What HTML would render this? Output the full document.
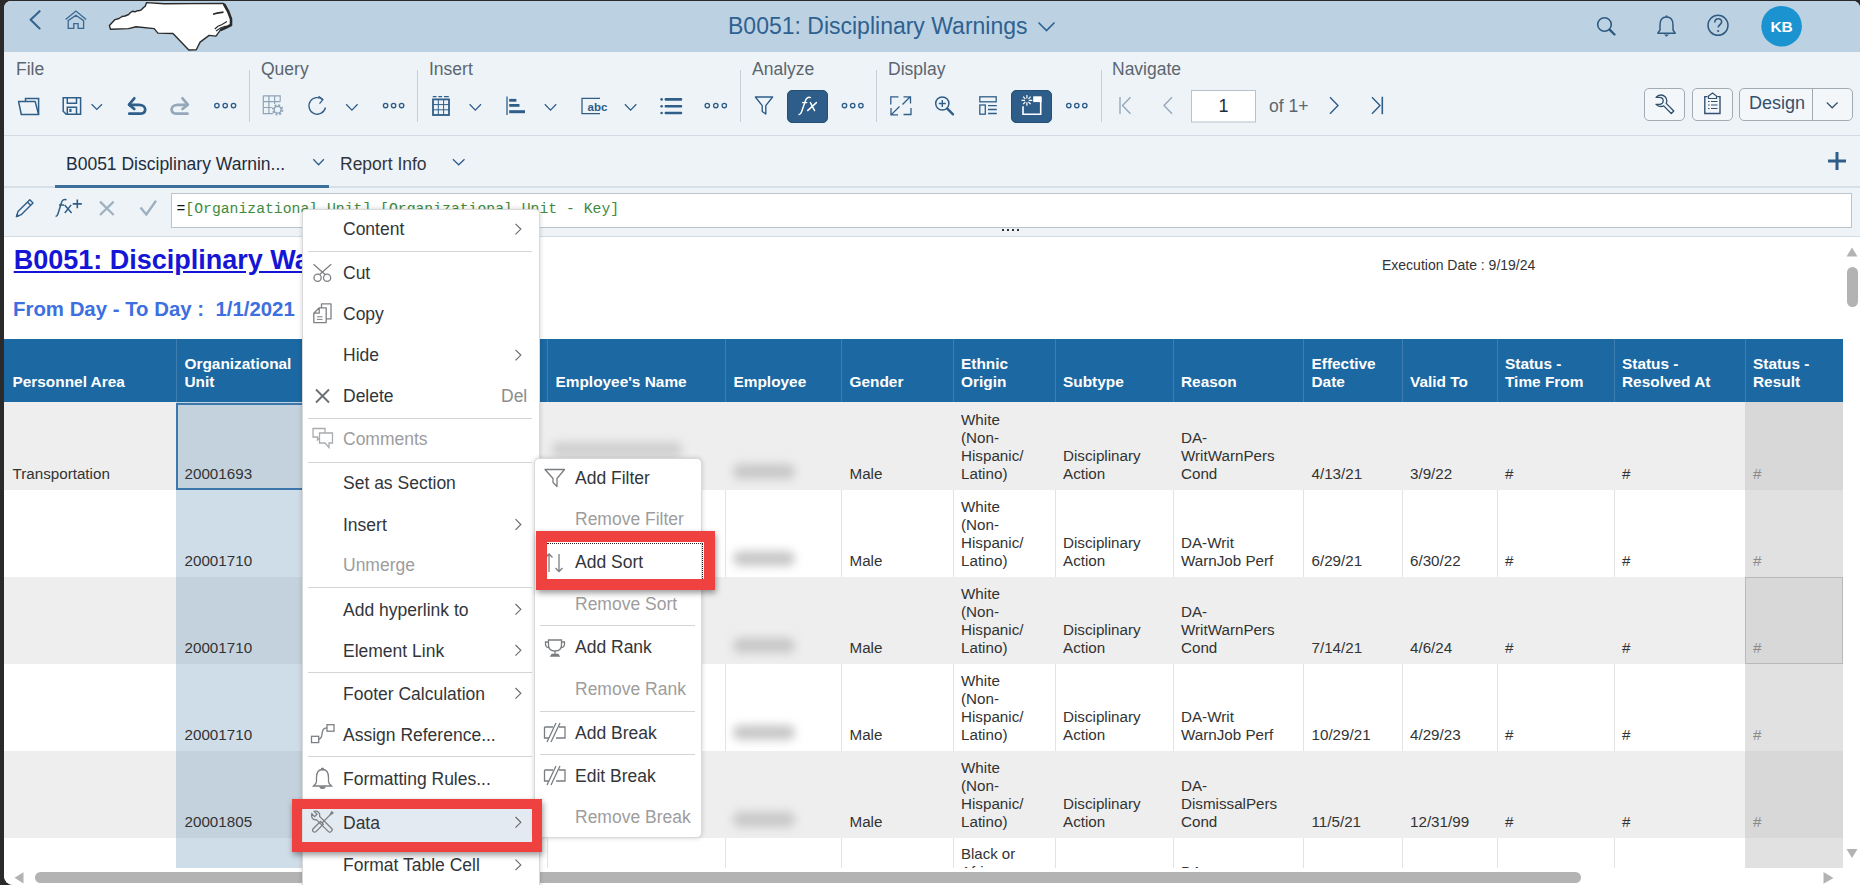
<!DOCTYPE html>
<html><head><meta charset="utf-8">
<style>
*{margin:0;padding:0;box-sizing:border-box}
html,body{width:1860px;height:885px;overflow:hidden;background:#2a2a2a;font-family:"Liberation Sans",sans-serif}
.a{position:absolute}
#win{position:absolute;left:4px;top:1px;width:1856px;height:884px;border-radius:7px 7px 0 9px;overflow:hidden;background:#fff}
#pg{position:absolute;left:-4px;top:-1px;width:1860px;height:885px}
svg{position:absolute;overflow:visible}
.lbl{position:absolute;font-size:17.5px;color:#5b6670;top:58.5px;white-space:nowrap;line-height:20px}
.sep{position:absolute;top:70px;width:1px;height:52px;background:#c5cfd8}
.th{position:absolute;top:339px;height:63px;background:#1a65a0;color:#fff;font-weight:bold;font-size:15px;line-height:18px;padding-left:8px;border-left:1px solid #3f7fb3}
.th span{position:absolute;left:8px;bottom:9px;white-space:nowrap}
.cell{position:absolute;font-size:15px;line-height:18px;color:#333;white-space:nowrap}
.mi{position:absolute;left:343px;font-size:17.5px;line-height:20px;color:#32363a;white-space:nowrap}
.mi.dis,.si.dis{color:#9d9d9d}
.ms{position:absolute;height:1px;background:#d3d6d9}
.si{position:absolute;left:575px;font-size:17.5px;line-height:20px;color:#32363a;white-space:nowrap}
.arr{position:absolute;left:514px}
</style></head><body>
<div id="win"><div id="pg">
<!-- shell header -->
<div class="a" style="left:0;top:0;width:1860px;height:52px;background:#bcd2e3"></div>
<svg style="left:0;top:0" width="1" height="1">
 <path d="M39.6 11.2 L30.6 19.8 L39.6 28.4" fill="none" stroke="#33638e" stroke-width="2.1" stroke-linecap="round" stroke-linejoin="round"/>
 <path d="M65.6 19.6 L75.9 11 L86.2 19.6" fill="none" stroke="#3b6690" stroke-width="1.3"/><path d="M68.2 28.3 V20.6 L75.9 15.2 L83.6 20.6 V28.3 H78.1 V23.6 H73.8 V28.3 Z" fill="none" stroke="#3b6690" stroke-width="1.3" stroke-linejoin="miter"/>
 <path d="M146.6 2.6 L164 3.8 L223.4 3.4 L227.9 11.3 L230.9 18.8 L230.9 24.8 L220.4 30.1 L215.9 36.1 L209.1 35.4 L200.1 42.1 L196.3 49.7 L188.8 50 L173 33.5 L157.9 33.1 L154.2 28.6 L136.1 26.7 L128.6 28.6 L110.5 29.3 L109.4 25.6 L115 19.6 L119 18.5 L122 16.5 L125 16 L128.6 14.5 L130.5 12.5 L132.4 11.3 L135 11.8 L137 10.8 L139.5 10.5 L141.4 9.8 L143.5 7.5 L145.1 6.4 Z" fill="#fff" stroke="#2b2b2b" stroke-width="1.4" stroke-linejoin="round"/>
 <path d="M224 4 L228.2 11.5 L231 19 L231 25 L225 28 L220.4 30.1" stroke="#2b2b2b" stroke-width="2.6" fill="none" stroke-linejoin="round"/>
 <path d="M213 14.2 L217 13.2 L223.5 12.2" stroke="#2b2b2b" stroke-width="1.7" fill="none"/>
 <path d="M214.8 29 L218 26.2 L222 24.5 L227 21.5 M216 31 L221 27.8 L226 26" stroke="#2b2b2b" stroke-width="1.2" fill="none"/>
</svg>
<div class="a" style="left:728px;top:12px;font-size:23px;line-height:28px;color:#2f6190;white-space:nowrap">B0051: Disciplinary Warnings</div>
<svg style="left:0;top:0" width="1" height="1">
 <path d="M1038.5 22.5 L1046.5 30.5 L1054.5 22.5" fill="none" stroke="#2f6190" stroke-width="1.6"/>
 <circle cx="1604.5" cy="24.5" r="6.8" fill="none" stroke="#2f5a80" stroke-width="1.6"/>
 <path d="M1609.6 29.6 L1614.5 34.5" stroke="#2f5a80" stroke-width="2.4" stroke-linecap="round"/>
 <path d="M1666.5 17 C1661.5 17 1660 21 1660 25 V30 L1657.8 33.2 H1675.2 L1673 30 V25 C1673 21 1671.5 17 1666.5 17 Z" fill="none" stroke="#2f5a80" stroke-width="1.5" stroke-linejoin="round"/>
 <circle cx="1666.5" cy="16.2" r="1" fill="#2f5a80"/>
 <path d="M1664 34.5 L1666.5 36.8 L1669 34.5 Z" fill="#2f5a80"/>
 <circle cx="1718" cy="25.3" r="10" fill="none" stroke="#2f5a80" stroke-width="1.5"/>
 <path d="M1714.8 22.5 C1714.8 20 1716.4 18.8 1718.2 18.8 C1720.2 18.8 1721.6 20.2 1721.6 22 C1721.6 24.6 1718.2 24.8 1718.2 27.6" fill="none" stroke="#2f5a80" stroke-width="1.6"/>
 <circle cx="1718.2" cy="31" r="1.1" fill="#2f5a80"/>
 <circle cx="1781.6" cy="26.2" r="20.3" fill="#1b93d1"/>
</svg>
<div class="a" style="left:1761px;top:17px;width:41px;text-align:center;font-size:15.5px;line-height:20px;font-weight:bold;letter-spacing:-0.3px;color:#fff">KB</div>

<!-- toolbar -->
<div class="a" style="left:0;top:52px;width:1860px;height:84px;background:#eef3f8;border-bottom:1px solid #d3dce5"></div>
<div class="lbl" style="left:16px">File</div>
<div class="lbl" style="left:261px">Query</div>
<div class="lbl" style="left:429px">Insert</div>
<div class="lbl" style="left:752px">Analyze</div>
<div class="lbl" style="left:888px">Display</div>
<div class="lbl" style="left:1112px">Navigate</div>
<div class="sep" style="left:249px"></div>
<div class="sep" style="left:417px"></div>
<div class="sep" style="left:740px"></div>
<div class="sep" style="left:876px"></div>
<div class="sep" style="left:1101px"></div>
<svg style="left:0;top:0" width="1" height="1" fill="none" stroke="#2f5e89" stroke-width="1.5">
 <!-- folder -->
 <path d="M25.5 101.3 V98.6 H38.6 V114.5"/>
 <path d="M18.6 101.6 H35.2 L38.6 114.5 H21.3 Z" stroke-linejoin="round"/>
 <!-- floppy -->
 <path d="M63.2 97.8 H80.6 V114.3 H66.2 L63.2 111.3 Z"/>
 <path d="M67.3 97.8 V103.3 H76.5 V97.8 M67.3 114.3 V107.2 H76.5 V114.3"/>
 <rect x="69.3" y="108.8" width="2.2" height="3.2" fill="#2f5e89" stroke="none"/>
 <path d="M91.6 104.2 L96.8 109.4 L102 104.2" stroke-width="1.3"/>
 <!-- undo -->
 <path d="M134.3 98.3 L129 104.6 L134.3 109" stroke-width="2.7" stroke-linecap="round" stroke-linejoin="round"/>
 <path d="M129.5 104.8 H139 C143 104.8 145.2 107 145.2 109.4 C145.2 112 143 113.7 139.5 113.7 H129.3" stroke-width="2.7" stroke-linecap="round"/>
 <!-- redo -->
 <g stroke="#94a8ba" stroke-width="2.7" stroke-linecap="round" stroke-linejoin="round">
 <path d="M182.5 98.3 L187.8 104.6 L182.5 109"/>
 <path d="M187.3 104.8 H177.8 C173.8 104.8 171.6 107 171.6 109.4 C171.6 112 173.8 113.7 177.3 113.7 H187.5"/>
 </g>
 <!-- more -->
 <g stroke-width="1.35"><circle cx="216.9" cy="105.5" r="2.2"/><circle cx="225.2" cy="105.5" r="2.2"/><circle cx="233.5" cy="105.5" r="2.2"/></g>
 <!-- grid gear -->
 <g stroke="#8ea3b6" stroke-width="1.2">
  <path d="M263.3 95.8 H280.2 V101.5 M263.3 95.8 V113.6 H275.2 M263.3 101.6 H280.2 M263.3 107.5 H273 M268.9 95.8 V113.6 M274.6 95.8 V104"/>
  <circle cx="277.6" cy="109.8" r="6.2" fill="#eef3f8" stroke="none"/>
 </g>
 <circle cx="277.6" cy="109.8" r="4.7" stroke="#8ea3b6" stroke-width="2" stroke-dasharray="1.85 1.85"/>
 <circle cx="277.6" cy="109.8" r="3.4" stroke="#8ea3b6" stroke-width="1.3" fill="#eef3f8"/>
 <!-- refresh -->
 <path d="M322.9 99.8 A8.3 8.3 0 1 0 325.4 107.5" stroke-width="1.3"/>
 <path d="M318.5 96.2 L322.9 99.6 L319.5 103.6" stroke-width="1.3" stroke-linejoin="round"/>
 <path d="M346.2 104.3 L351.9 110.1 L357.6 104.3" stroke-width="1.3"/>
 <g stroke-width="1.35"><circle cx="385.6" cy="105.5" r="2.2"/><circle cx="393.6" cy="105.5" r="2.2"/><circle cx="401.6" cy="105.5" r="2.2"/></g>
 <!-- table -->
 <path d="M432.8 96.6 H436.5 M438.4 96.6 H442.1 M444 96.6 H448.8" stroke-width="1.2"/>
 <rect x="433" y="99.4" width="16" height="15.6" stroke-width="1.8"/>
 <path d="M433 104.6 H449 M433 109.8 H449 M438.3 99.4 V115 M443.6 99.4 V115" stroke-width="1"/>
 <path d="M469.6 104.3 L475.3 110.1 L481 104.3" stroke-width="1.3"/>
 <!-- bar chart -->
 <path d="M507 96.6 V114.9" stroke-width="1.3"/>
 <g fill="#2f5e89" stroke="none"><rect x="509.2" y="98.9" width="7.2" height="2.8"/><rect x="509.2" y="104" width="10.3" height="2.8"/><rect x="509.2" y="110.2" width="15.8" height="3"/></g>
 <path d="M544.8 104.3 L550.5 110.1 L556.2 104.3" stroke-width="1.3"/>
 <!-- abc -->
 <path d="M600 98.3 H582 V113.6 H600" stroke-width="1.3"/>
 <path d="M624.9 104.3 L630.6 110.1 L636.3 104.3" stroke-width="1.3"/>
 <!-- list -->
 <g fill="#2f5e89" stroke="none"><circle cx="661.6" cy="99.4" r="1.3"/><circle cx="661.6" cy="106.2" r="1.3"/><circle cx="661.6" cy="113" r="1.3"/>
 <rect x="664.6" y="98.1" width="17.6" height="2.6" rx="1"/><rect x="664.6" y="104.9" width="17.6" height="2.6" rx="1"/><rect x="664.6" y="111.7" width="17.6" height="2.6" rx="1"/></g>
 <g stroke-width="1.35"><circle cx="707.3" cy="105.5" r="2.2"/><circle cx="715.8" cy="105.5" r="2.2"/><circle cx="724.3" cy="105.5" r="2.2"/></g>
 <!-- filter -->
 <path d="M755.4 97 H772.6 L765.8 105.6 V114 L762.2 111.5 V105.6 Z" stroke-width="1.4" stroke-linejoin="round"/>
 <rect x="787.5" y="90.5" width="40" height="32" rx="4.5" fill="#2e5d89" stroke="#264f78" stroke-width="1"/>
 <g stroke-width="1.35"><circle cx="844.5" cy="105.5" r="2.2"/><circle cx="852.7" cy="105.5" r="2.2"/><circle cx="860.9" cy="105.5" r="2.2"/></g>
 <!-- fit -->
 <path d="M890.8 104.5 V96.8 H898.5 M911 108 V114.5 H903.5" stroke-width="1.3"/>
 <path d="M902.5 104.5 L910.2 96.8 M903.5 96.8 H910.5 V103.5 M899.5 106.5 L891.6 114.4 M891 108 V114.8 H898" stroke-width="1.3"/>
 <!-- zoom -->
 <circle cx="942.3" cy="103.5" r="6.6" stroke-width="1.5"/>
 <path d="M942.3 100 V107 M938.8 103.5 H945.8" stroke-width="1.4"/>
 <path d="M947.3 108.6 L953 114.3" stroke-width="2.4" stroke-linecap="round"/>
 <!-- layout -->
 <rect x="979.8" y="96.8" width="16.4" height="5" stroke-width="1.3"/>
 <rect x="979.8" y="105" width="5.5" height="9.2" stroke-width="1.3"/>
 <path d="M988 105.6 H996.8 M988 109.5 H996.8 M988 113.5 H996.8" stroke-width="1.3"/>
 <rect x="1011.5" y="90.5" width="40" height="32" rx="4.5" fill="#2e5d89" stroke="#264f78" stroke-width="1"/>
 <rect x="1033.2" y="96.3" width="8.3" height="5.8" fill="#fff" stroke="none"/>
 <g stroke="#fff" stroke-width="1.6"><path d="M1023 106.2 V114.2 H1040.7 V97"/><path d="M1026.9 95 V98.6 M1026.9 102.2 V105.8 M1021.5 100.4 H1025.1 M1028.7 100.4 H1032.3 M1023.1 96.6 L1025.3 98.8 M1028.5 102 L1030.7 104.2 M1030.7 96.6 L1028.5 98.8 M1025.3 102 L1023.1 104.2" stroke-width="1.2"/></g>
 <g stroke-width="1.35"><circle cx="1068.8" cy="105.5" r="2.2"/><circle cx="1076.8" cy="105.5" r="2.2"/><circle cx="1084.8" cy="105.5" r="2.2"/></g>
 <!-- nav -->
 <g stroke="#94a8ba" stroke-width="1.4"><path d="M1120 97 V114"/><path d="M1130.5 97.2 L1122.5 105.5 L1130.5 113.8"/><path d="M1172 97.2 L1164 105.5 L1172 113.8"/></g>
 <rect x="1191.5" y="90.5" width="64" height="31.5" fill="#fff" stroke="#b9c2ca" stroke-width="1"/>
 <path d="M1330 97.2 L1338 105.5 L1330 113.8" stroke-width="1.4"/>
 <path d="M1372 97.2 L1380 105.5 L1372 113.8" stroke-width="1.4"/><path d="M1382.3 96.8 V114.3" stroke-width="1.6"/>
 <!-- right buttons -->
 <rect x="1644.5" y="88.5" width="40" height="32" rx="4.5" fill="#f4f7fa" stroke="#a3abb2" stroke-width="1"/>
 <rect x="1692.5" y="88.5" width="40" height="32" rx="4.5" fill="#f4f7fa" stroke="#a3abb2" stroke-width="1"/>
 <rect x="1739.5" y="88.5" width="113" height="32" rx="4.5" fill="#f4f7fa" stroke="#a3abb2" stroke-width="1"/>
 <path d="M1812.5 89 V120" stroke="#a3abb2" stroke-width="1"/>
 <path d="M1826.8 102.5 L1832.2 107.8 L1837.6 102.5" stroke-width="1.2" stroke="#32506f"/>
 <!-- wrench -->
 <path d="M1656 97.3 C1657.2 95.8 1659 95 1661 95 C1664.3 95 1666.8 97.6 1666.8 100.8 C1666.8 101.8 1666.6 102.6 1666.2 103.4 L1673.8 111 L1671.3 113.5 L1663.7 105.9 C1662.9 106.3 1662 106.5 1661 106.5 C1659 106.5 1657.2 105.7 1656 104.3 L1659.2 104.3 C1661.7 104.3 1663.2 102.8 1663.2 100.8 C1663.2 98.8 1661.7 97.3 1659.2 97.3 Z" stroke="#2f4f6e" stroke-width="1.3" stroke-linejoin="round"/>
 <!-- clipboard -->
 <path d="M1707.6 96.6 H1704.8 V113.5 H1720 V96.6 H1717.2" stroke="#32506f" stroke-width="1.4"/>
 <path d="M1708.5 98.5 H1716.5 V96 L1712.5 93 L1708.5 96 Z" stroke="#32506f" stroke-width="1.2"/>
 <path d="M1708 101.5 H1709.6 M1711 101.5 H1717.5 M1708 105 H1709.6 M1711 105 H1717.5 M1708 108.5 H1709.6 M1711 108.5 H1717.5" stroke="#32506f" stroke-width="1.1"/>
</svg>
<svg style="left:0;top:0" width="1" height="1" fill="none" stroke="#fff" stroke-width="1.45" stroke-linecap="round"><path d="M810.4 97.6 C808 96.7 806.3 98 805.5 100.5 L801.6 111.8 C801 113.7 800.1 114.5 799 114.6"/><path d="M802.6 102.6 H806.8"/><path d="M807.6 110.6 L816.4 102.6 M810.4 102.6 L814.6 110.6"/></svg>
<div class="a" style="left:587.5px;top:99.5px;font-size:11.5px;line-height:14px;font-weight:bold;color:#2f5e89">abc</div>
<div class="a" style="left:1192px;top:95px;width:63px;text-align:center;font-size:18px;line-height:22px;color:#1d2d3e">1</div>
<div class="a" style="left:1269px;top:95px;font-size:17.5px;line-height:22px;color:#5b6670;white-space:nowrap">of 1+</div>
<div class="a" style="left:1749px;top:92px;font-size:18px;line-height:22px;color:#32506f;white-space:nowrap">Design</div>
<!-- tab bar -->
<div class="a" style="left:0;top:136px;width:1860px;height:52px;background:#eef3f8;border-bottom:2px solid #d6e0e9"></div>
<div class="a" style="left:55px;top:185px;width:274px;height:3px;background:#3d6f9b"></div>
<div class="a" style="left:66px;top:152.7px;font-size:17.5px;line-height:22px;color:#1d2d3e;white-space:nowrap">B0051 Disciplinary Warnin...</div>
<div class="a" style="left:340px;top:152.7px;font-size:17.5px;line-height:22px;color:#32363a;white-space:nowrap">Report Info</div>
<svg style="left:0;top:0" width="1" height="1" fill="none">
 <path d="M313.3 159.3 L318.6 164.8 L323.9 159.3" stroke="#2f5e89" stroke-width="1.3"/>
 <path d="M452.9 159.3 L458.7 164.8 L464.5 159.3" stroke="#2f5e89" stroke-width="1.3"/>
 <path d="M1837 152 V170 M1828 161 H1846" stroke="#2f5e89" stroke-width="3"/>
</svg>
<!-- formula bar -->
<div class="a" style="left:0;top:188px;width:1860px;height:49px;background:#eef3f8;border-bottom:1px solid #d3dbe3"></div>
<div class="a" style="left:171px;top:193px;width:1681px;height:35px;background:#fff;border:1px solid #bcc4cb"></div>
<svg style="left:0;top:0" width="1" height="1" fill="none">
 <path d="M16.5 216.5 L18 211.5 L29.8 199.7 L33 202.9 L21.2 214.7 Z M27.4 202.1 L30.6 205.3" stroke="#2f5e89" stroke-width="1.4" stroke-linejoin="round"/>
 <path d="M16.2 216.8 L18.5 216.2 L16.8 214.5 Z" fill="#2f5e89" stroke="#2f5e89" stroke-width="1"/>
 <path d="M100 201.6 L113.7 215 M113.7 201.6 L100 215" stroke="#9fb1bf" stroke-width="2.2"/>
 <path d="M140.5 207.5 L146.3 214.5 L156 200.8" stroke="#9fb1bf" stroke-width="2.4"/>
 <path d="M77.3 199.4 V208.2 M72.7 203.9 H81.8" stroke="#2f5e89" stroke-width="1.6"/>
</svg>
<svg style="left:0;top:0" width="1" height="1" fill="none" stroke="#2f5e89" stroke-width="1.5"><path d="M66.5 199.8 C64 198.8 62.2 200 61.5 202.5 L58 213.8 C57.4 215.8 56.6 216.5 55.6 216.6"/><path d="M59 204.9 H64"/><path d="M64.6 204.9 L71.6 213 M71.2 204.9 L64.8 213"/></svg>
<div class="a" style="left:176.5px;top:200px;font-family:'Liberation Mono',monospace;font-size:14.75px;line-height:18px;color:#3e8a3e;white-space:pre"><span style="color:#111">=</span>[Organizational Unit].[Organizational Unit - Key]</div>
<div class="a" style="left:1002px;top:229px;width:19px;height:2px;background-image:linear-gradient(90deg,#333 2px,transparent 2px);background-size:5px 2px"></div>

<!-- report -->
<div class="a" style="left:13.7px;top:243.5px;font-size:27px;line-height:32px;font-weight:bold;color:#1515d6;text-decoration:underline;white-space:nowrap">B0051: Disciplinary Warnings</div>
<div class="a" style="left:13px;top:296.8px;font-size:20.4px;line-height:24px;font-weight:bold;color:#3d6fe0;white-space:pre">From Day - To Day :  1/1/2021</div>
<div class="a" style="left:1382px;top:256.5px;font-size:14px;line-height:16px;color:#333;white-space:nowrap">Execution Date : 9/19/24</div>
<div class="a" style="left:4px;top:339px;width:1839px;height:63px;background:#1b68a2"></div>
<div class="a" style="left:176px;top:339px;width:1px;height:63px;background:#3f7db1"></div>
<div class="a" style="left:400px;top:339px;width:1px;height:63px;background:#3f7db1"></div>
<div class="a" style="left:547px;top:339px;width:1px;height:63px;background:#3f7db1"></div>
<div class="a" style="left:725px;top:339px;width:1px;height:63px;background:#3f7db1"></div>
<div class="a" style="left:841px;top:339px;width:1px;height:63px;background:#3f7db1"></div>
<div class="a" style="left:952.5px;top:339px;width:1px;height:63px;background:#3f7db1"></div>
<div class="a" style="left:1054.5px;top:339px;width:1px;height:63px;background:#3f7db1"></div>
<div class="a" style="left:1172.5px;top:339px;width:1px;height:63px;background:#3f7db1"></div>
<div class="a" style="left:1303px;top:339px;width:1px;height:63px;background:#3f7db1"></div>
<div class="a" style="left:1401.5px;top:339px;width:1px;height:63px;background:#3f7db1"></div>
<div class="a" style="left:1496.5px;top:339px;width:1px;height:63px;background:#3f7db1"></div>
<div class="a" style="left:1613.5px;top:339px;width:1px;height:63px;background:#3f7db1"></div>
<div class="a" style="left:1744.5px;top:339px;width:1px;height:63px;background:#3f7db1"></div>
<div class="a" style="left:12.5px;bottom:494.2px;font-size:15.4px;line-height:18px;font-weight:bold;color:#fff;white-space:nowrap">Personnel Area</div>
<div class="a" style="left:184.5px;bottom:494.2px;font-size:15.4px;line-height:18px;font-weight:bold;color:#fff;white-space:nowrap">Organizational<br>Unit</div>
<div class="a" style="left:555.5px;bottom:494.2px;font-size:15.4px;line-height:18px;font-weight:bold;color:#fff;white-space:nowrap">Employee's Name</div>
<div class="a" style="left:733.5px;bottom:494.2px;font-size:15.4px;line-height:18px;font-weight:bold;color:#fff;white-space:nowrap">Employee</div>
<div class="a" style="left:849.5px;bottom:494.2px;font-size:15.4px;line-height:18px;font-weight:bold;color:#fff;white-space:nowrap">Gender</div>
<div class="a" style="left:961.0px;bottom:494.2px;font-size:15.4px;line-height:18px;font-weight:bold;color:#fff;white-space:nowrap">Ethnic<br>Origin</div>
<div class="a" style="left:1063.0px;bottom:494.2px;font-size:15.4px;line-height:18px;font-weight:bold;color:#fff;white-space:nowrap">Subtype</div>
<div class="a" style="left:1181.0px;bottom:494.2px;font-size:15.4px;line-height:18px;font-weight:bold;color:#fff;white-space:nowrap">Reason</div>
<div class="a" style="left:1311.5px;bottom:494.2px;font-size:15.4px;line-height:18px;font-weight:bold;color:#fff;white-space:nowrap">Effective<br>Date</div>
<div class="a" style="left:1410.0px;bottom:494.2px;font-size:15.4px;line-height:18px;font-weight:bold;color:#fff;white-space:nowrap">Valid To</div>
<div class="a" style="left:1505.0px;bottom:494.2px;font-size:15.4px;line-height:18px;font-weight:bold;color:#fff;white-space:nowrap">Status -<br>Time From</div>
<div class="a" style="left:1622.0px;bottom:494.2px;font-size:15.4px;line-height:18px;font-weight:bold;color:#fff;white-space:nowrap">Status -<br>Resolved At</div>
<div class="a" style="left:1753.0px;bottom:494.2px;font-size:15.4px;line-height:18px;font-weight:bold;color:#fff;white-space:nowrap">Status -<br>Result</div>
<div class="a" style="left:4px;top:402px;width:1839px;height:87.5px;background:#eeeeee"></div>
<div class="a" style="left:176px;top:402px;width:224px;height:87.5px;background:#c4d2dd"></div>
<div class="a" style="left:1744.5px;top:402px;width:98.5px;height:87.5px;background:#d8d8d8"></div>
<div class="a" style="left:4px;top:489.5px;width:1839px;height:87.5px;background:#ffffff"></div>
<div class="a" style="left:176px;top:489.5px;width:224px;height:87.5px;background:#cfdde9"></div>
<div class="a" style="left:1744.5px;top:489.5px;width:98.5px;height:87.5px;background:#e1e1e1"></div>
<div class="a" style="left:400px;top:489.5px;width:1px;height:87.5px;background:#e3e3e3"></div>
<div class="a" style="left:547px;top:489.5px;width:1px;height:87.5px;background:#e3e3e3"></div>
<div class="a" style="left:725px;top:489.5px;width:1px;height:87.5px;background:#e3e3e3"></div>
<div class="a" style="left:841px;top:489.5px;width:1px;height:87.5px;background:#e3e3e3"></div>
<div class="a" style="left:952.5px;top:489.5px;width:1px;height:87.5px;background:#e3e3e3"></div>
<div class="a" style="left:1054.5px;top:489.5px;width:1px;height:87.5px;background:#e3e3e3"></div>
<div class="a" style="left:1172.5px;top:489.5px;width:1px;height:87.5px;background:#e3e3e3"></div>
<div class="a" style="left:1303px;top:489.5px;width:1px;height:87.5px;background:#e3e3e3"></div>
<div class="a" style="left:1401.5px;top:489.5px;width:1px;height:87.5px;background:#e3e3e3"></div>
<div class="a" style="left:1496.5px;top:489.5px;width:1px;height:87.5px;background:#e3e3e3"></div>
<div class="a" style="left:1613.5px;top:489.5px;width:1px;height:87.5px;background:#e3e3e3"></div>
<div class="a" style="left:1744.5px;top:489.5px;width:1px;height:87.5px;background:#e3e3e3"></div>
<div class="a" style="left:4px;top:577px;width:1839px;height:87px;background:#eeeeee"></div>
<div class="a" style="left:176px;top:577px;width:224px;height:87px;background:#c4d2dd"></div>
<div class="a" style="left:1744.5px;top:577px;width:98.5px;height:87px;background:#d8d8d8"></div>
<div class="a" style="left:4px;top:664px;width:1839px;height:86.5px;background:#ffffff"></div>
<div class="a" style="left:176px;top:664px;width:224px;height:86.5px;background:#cfdde9"></div>
<div class="a" style="left:1744.5px;top:664px;width:98.5px;height:86.5px;background:#e1e1e1"></div>
<div class="a" style="left:400px;top:664px;width:1px;height:86.5px;background:#e3e3e3"></div>
<div class="a" style="left:547px;top:664px;width:1px;height:86.5px;background:#e3e3e3"></div>
<div class="a" style="left:725px;top:664px;width:1px;height:86.5px;background:#e3e3e3"></div>
<div class="a" style="left:841px;top:664px;width:1px;height:86.5px;background:#e3e3e3"></div>
<div class="a" style="left:952.5px;top:664px;width:1px;height:86.5px;background:#e3e3e3"></div>
<div class="a" style="left:1054.5px;top:664px;width:1px;height:86.5px;background:#e3e3e3"></div>
<div class="a" style="left:1172.5px;top:664px;width:1px;height:86.5px;background:#e3e3e3"></div>
<div class="a" style="left:1303px;top:664px;width:1px;height:86.5px;background:#e3e3e3"></div>
<div class="a" style="left:1401.5px;top:664px;width:1px;height:86.5px;background:#e3e3e3"></div>
<div class="a" style="left:1496.5px;top:664px;width:1px;height:86.5px;background:#e3e3e3"></div>
<div class="a" style="left:1613.5px;top:664px;width:1px;height:86.5px;background:#e3e3e3"></div>
<div class="a" style="left:1744.5px;top:664px;width:1px;height:86.5px;background:#e3e3e3"></div>
<div class="a" style="left:4px;top:750.5px;width:1839px;height:87.5px;background:#eeeeee"></div>
<div class="a" style="left:176px;top:750.5px;width:224px;height:87.5px;background:#c4d2dd"></div>
<div class="a" style="left:1744.5px;top:750.5px;width:98.5px;height:87.5px;background:#d8d8d8"></div>
<div class="a" style="left:4px;top:838px;width:1839px;height:30px;background:#ffffff"></div>
<div class="a" style="left:176px;top:838px;width:224px;height:30px;background:#cfdde9"></div>
<div class="a" style="left:1744.5px;top:838px;width:98.5px;height:30px;background:#e1e1e1"></div>
<div class="a" style="left:400px;top:838px;width:1px;height:30px;background:#e3e3e3"></div>
<div class="a" style="left:547px;top:838px;width:1px;height:30px;background:#e3e3e3"></div>
<div class="a" style="left:725px;top:838px;width:1px;height:30px;background:#e3e3e3"></div>
<div class="a" style="left:841px;top:838px;width:1px;height:30px;background:#e3e3e3"></div>
<div class="a" style="left:952.5px;top:838px;width:1px;height:30px;background:#e3e3e3"></div>
<div class="a" style="left:1054.5px;top:838px;width:1px;height:30px;background:#e3e3e3"></div>
<div class="a" style="left:1172.5px;top:838px;width:1px;height:30px;background:#e3e3e3"></div>
<div class="a" style="left:1303px;top:838px;width:1px;height:30px;background:#e3e3e3"></div>
<div class="a" style="left:1401.5px;top:838px;width:1px;height:30px;background:#e3e3e3"></div>
<div class="a" style="left:1496.5px;top:838px;width:1px;height:30px;background:#e3e3e3"></div>
<div class="a" style="left:1613.5px;top:838px;width:1px;height:30px;background:#e3e3e3"></div>
<div class="a" style="left:1744.5px;top:838px;width:1px;height:30px;background:#e3e3e3"></div>
<div class="a" style="left:12.5px;bottom:402.1px;font-size:15.2px;line-height:18px;color:#333;white-space:nowrap">Transportation</div>
<div class="a" style="left:184.5px;bottom:402.1px;font-size:15.2px;line-height:18px;color:#333;white-space:nowrap">20001693</div>
<div class="a" style="left:849.5px;bottom:402.1px;font-size:15.2px;line-height:18px;color:#333;white-space:nowrap">Male</div>
<div class="a" style="left:961.0px;bottom:402.1px;font-size:15.2px;line-height:18px;color:#333;white-space:nowrap">White<br>(Non-<br>Hispanic/<br>Latino)</div>
<div class="a" style="left:1063.0px;bottom:402.1px;font-size:15.2px;line-height:18px;color:#333;white-space:nowrap">Disciplinary<br>Action</div>
<div class="a" style="left:1181.0px;bottom:402.1px;font-size:15.2px;line-height:18px;color:#333;white-space:nowrap">DA-<br>WritWarnPers<br>Cond</div>
<div class="a" style="left:1311.5px;bottom:402.1px;font-size:15.2px;line-height:18px;color:#333;white-space:nowrap">4/13/21</div>
<div class="a" style="left:1410.0px;bottom:402.1px;font-size:15.2px;line-height:18px;color:#333;white-space:nowrap">3/9/22</div>
<div class="a" style="left:1505.0px;bottom:402.1px;font-size:15.2px;line-height:18px;color:#333;white-space:nowrap">#</div>
<div class="a" style="left:1622.0px;bottom:402.1px;font-size:15.2px;line-height:18px;color:#333;white-space:nowrap">#</div>
<div class="a" style="left:1753.0px;bottom:402.1px;font-size:15.2px;line-height:18px;color:#8a8a8a;white-space:nowrap">#</div>
<div class="a" style="left:184.5px;bottom:314.6px;font-size:15.2px;line-height:18px;color:#333;white-space:nowrap">20001710</div>
<div class="a" style="left:849.5px;bottom:314.6px;font-size:15.2px;line-height:18px;color:#333;white-space:nowrap">Male</div>
<div class="a" style="left:961.0px;bottom:314.6px;font-size:15.2px;line-height:18px;color:#333;white-space:nowrap">White<br>(Non-<br>Hispanic/<br>Latino)</div>
<div class="a" style="left:1063.0px;bottom:314.6px;font-size:15.2px;line-height:18px;color:#333;white-space:nowrap">Disciplinary<br>Action</div>
<div class="a" style="left:1181.0px;bottom:314.6px;font-size:15.2px;line-height:18px;color:#333;white-space:nowrap">DA-Writ<br>WarnJob Perf</div>
<div class="a" style="left:1311.5px;bottom:314.6px;font-size:15.2px;line-height:18px;color:#333;white-space:nowrap">6/29/21</div>
<div class="a" style="left:1410.0px;bottom:314.6px;font-size:15.2px;line-height:18px;color:#333;white-space:nowrap">6/30/22</div>
<div class="a" style="left:1505.0px;bottom:314.6px;font-size:15.2px;line-height:18px;color:#333;white-space:nowrap">#</div>
<div class="a" style="left:1622.0px;bottom:314.6px;font-size:15.2px;line-height:18px;color:#333;white-space:nowrap">#</div>
<div class="a" style="left:1753.0px;bottom:314.6px;font-size:15.2px;line-height:18px;color:#8a8a8a;white-space:nowrap">#</div>
<div class="a" style="left:184.5px;bottom:227.6px;font-size:15.2px;line-height:18px;color:#333;white-space:nowrap">20001710</div>
<div class="a" style="left:849.5px;bottom:227.6px;font-size:15.2px;line-height:18px;color:#333;white-space:nowrap">Male</div>
<div class="a" style="left:961.0px;bottom:227.6px;font-size:15.2px;line-height:18px;color:#333;white-space:nowrap">White<br>(Non-<br>Hispanic/<br>Latino)</div>
<div class="a" style="left:1063.0px;bottom:227.6px;font-size:15.2px;line-height:18px;color:#333;white-space:nowrap">Disciplinary<br>Action</div>
<div class="a" style="left:1181.0px;bottom:227.6px;font-size:15.2px;line-height:18px;color:#333;white-space:nowrap">DA-<br>WritWarnPers<br>Cond</div>
<div class="a" style="left:1311.5px;bottom:227.6px;font-size:15.2px;line-height:18px;color:#333;white-space:nowrap">7/14/21</div>
<div class="a" style="left:1410.0px;bottom:227.6px;font-size:15.2px;line-height:18px;color:#333;white-space:nowrap">4/6/24</div>
<div class="a" style="left:1505.0px;bottom:227.6px;font-size:15.2px;line-height:18px;color:#333;white-space:nowrap">#</div>
<div class="a" style="left:1622.0px;bottom:227.6px;font-size:15.2px;line-height:18px;color:#333;white-space:nowrap">#</div>
<div class="a" style="left:1753.0px;bottom:227.6px;font-size:15.2px;line-height:18px;color:#8a8a8a;white-space:nowrap">#</div>
<div class="a" style="left:184.5px;bottom:141.1px;font-size:15.2px;line-height:18px;color:#333;white-space:nowrap">20001710</div>
<div class="a" style="left:849.5px;bottom:141.1px;font-size:15.2px;line-height:18px;color:#333;white-space:nowrap">Male</div>
<div class="a" style="left:961.0px;bottom:141.1px;font-size:15.2px;line-height:18px;color:#333;white-space:nowrap">White<br>(Non-<br>Hispanic/<br>Latino)</div>
<div class="a" style="left:1063.0px;bottom:141.1px;font-size:15.2px;line-height:18px;color:#333;white-space:nowrap">Disciplinary<br>Action</div>
<div class="a" style="left:1181.0px;bottom:141.1px;font-size:15.2px;line-height:18px;color:#333;white-space:nowrap">DA-Writ<br>WarnJob Perf</div>
<div class="a" style="left:1311.5px;bottom:141.1px;font-size:15.2px;line-height:18px;color:#333;white-space:nowrap">10/29/21</div>
<div class="a" style="left:1410.0px;bottom:141.1px;font-size:15.2px;line-height:18px;color:#333;white-space:nowrap">4/29/23</div>
<div class="a" style="left:1505.0px;bottom:141.1px;font-size:15.2px;line-height:18px;color:#333;white-space:nowrap">#</div>
<div class="a" style="left:1622.0px;bottom:141.1px;font-size:15.2px;line-height:18px;color:#333;white-space:nowrap">#</div>
<div class="a" style="left:1753.0px;bottom:141.1px;font-size:15.2px;line-height:18px;color:#8a8a8a;white-space:nowrap">#</div>
<div class="a" style="left:184.5px;bottom:53.6px;font-size:15.2px;line-height:18px;color:#333;white-space:nowrap">20001805</div>
<div class="a" style="left:849.5px;bottom:53.6px;font-size:15.2px;line-height:18px;color:#333;white-space:nowrap">Male</div>
<div class="a" style="left:961.0px;bottom:53.6px;font-size:15.2px;line-height:18px;color:#333;white-space:nowrap">White<br>(Non-<br>Hispanic/<br>Latino)</div>
<div class="a" style="left:1063.0px;bottom:53.6px;font-size:15.2px;line-height:18px;color:#333;white-space:nowrap">Disciplinary<br>Action</div>
<div class="a" style="left:1181.0px;bottom:53.6px;font-size:15.2px;line-height:18px;color:#333;white-space:nowrap">DA-<br>DismissalPers<br>Cond</div>
<div class="a" style="left:1311.5px;bottom:53.6px;font-size:15.2px;line-height:18px;color:#333;white-space:nowrap">11/5/21</div>
<div class="a" style="left:1410.0px;bottom:53.6px;font-size:15.2px;line-height:18px;color:#333;white-space:nowrap">12/31/99</div>
<div class="a" style="left:1505.0px;bottom:53.6px;font-size:15.2px;line-height:18px;color:#333;white-space:nowrap">#</div>
<div class="a" style="left:1622.0px;bottom:53.6px;font-size:15.2px;line-height:18px;color:#333;white-space:nowrap">#</div>
<div class="a" style="left:1753.0px;bottom:53.6px;font-size:15.2px;line-height:18px;color:#8a8a8a;white-space:nowrap">#</div>
<div class="a" style="left:961px;top:845px;font-size:15px;line-height:18px;color:#333;white-space:nowrap">Black or<br>African</div>
<div class="a" style="left:1181px;top:863px;font-size:15px;line-height:18px;color:#333;white-space:nowrap">DA-</div>
<div class="a" style="left:4px;top:868px;width:1856px;height:17px;background:#fff"></div>
<div class="a" style="left:176px;top:402.5px;width:226px;height:87px;border:2px solid #3b77ac"></div>
<div class="a" style="left:1744.5px;top:577px;width:98.5px;height:87px;border:1px solid #b9b9b9"></div>
<div class="a" style="left:733px;top:463.5px;width:62px;height:15px;background:#c8c8c8;filter:blur(5px);border-radius:7px"></div>
<div class="a" style="left:733px;top:551px;width:62px;height:15px;background:#c8c8c8;filter:blur(5px);border-radius:7px"></div>
<div class="a" style="left:733px;top:638px;width:62px;height:15px;background:#c8c8c8;filter:blur(5px);border-radius:7px"></div>
<div class="a" style="left:733px;top:724.5px;width:62px;height:15px;background:#c8c8c8;filter:blur(5px);border-radius:7px"></div>
<div class="a" style="left:733px;top:812px;width:62px;height:15px;background:#c8c8c8;filter:blur(5px);border-radius:7px"></div>
<div class="a" style="left:552px;top:442px;width:130px;height:15px;background:#cfcfcf;filter:blur(5px);border-radius:6px"></div><div class="a" style="left:34.5px;top:872px;width:1546.5px;height:11px;border-radius:6px;background:#b3b3b3"></div>
<svg style="left:0;top:0" width="1" height="1"><path d="M14.5 877.8 L23.5 872.3 V883.5 Z" fill="#b3b3b3"/><path d="M1833.5 877.9 L1823.5 872 V883.8 Z" fill="#b3b3b3"/><path d="M1852 247.5 L1846.5 256.5 H1857.5 Z" fill="#b3b3b3"/><path d="M1852 858 L1846.5 849 H1857.5 Z" fill="#b3b3b3"/></svg>
<div class="a" style="left:1847px;top:267px;width:11px;height:40px;border-radius:6px;background:#b3b3b3"></div>
<div class="a" style="left:301.5px;top:208.5px;width:238px;height:690px;background:#fff;border:1px solid #d9d9d9;border-radius:4px;box-shadow:0 0 5px rgba(0,0,0,0.18)"></div>
<div class="a" style="left:302.5px;top:806px;width:229px;height:36px;background:#e4eaf1"></div>
<div class="ms" style="left:308px;top:251.0px;width:224px"></div>
<div class="ms" style="left:308px;top:417.9px;width:224px"></div>
<div class="ms" style="left:308px;top:461.9px;width:224px"></div>
<div class="ms" style="left:308px;top:586.6px;width:224px"></div>
<div class="ms" style="left:308px;top:672.1px;width:224px"></div>
<div class="ms" style="left:308px;top:756.3px;width:224px"></div>
<div class="mi" style="bottom:645.7px">Content</div>
<svg style="left:0;top:0" width="1" height="1"><path d="M515.5 223.8 L520.8 229.10000000000002 L515.5 234.4" fill="none" stroke="#6a6d70" stroke-width="1.2"/></svg>
<div class="mi" style="bottom:602.0px">Cut</div>
<div class="mi" style="bottom:560.7px">Copy</div>
<div class="mi" style="bottom:519.7px">Hide</div>
<svg style="left:0;top:0" width="1" height="1"><path d="M515.5 349.8 L520.8 355.1 L515.5 360.40000000000003" fill="none" stroke="#6a6d70" stroke-width="1.2"/></svg>
<div class="mi" style="bottom:478.7px">Delete</div>
<div class="mi dis" style="bottom:435.8px">Comments</div>
<div class="mi" style="bottom:391.6px">Set as Section</div>
<div class="mi" style="bottom:350.29999999999995px">Insert</div>
<svg style="left:0;top:0" width="1" height="1"><path d="M515.5 519.2 L520.8 524.5 L515.5 529.8000000000001" fill="none" stroke="#6a6d70" stroke-width="1.2"/></svg>
<div class="mi dis" style="bottom:309.70000000000005px">Unmerge</div>
<div class="mi" style="bottom:265.5px">Add hyperlink to</div>
<svg style="left:0;top:0" width="1" height="1"><path d="M515.5 604 L520.8 609.3 L515.5 614.6" fill="none" stroke="#6a6d70" stroke-width="1.2"/></svg>
<div class="mi" style="bottom:224.5px">Element Link</div>
<svg style="left:0;top:0" width="1" height="1"><path d="M515.5 645 L520.8 650.3 L515.5 655.6" fill="none" stroke="#6a6d70" stroke-width="1.2"/></svg>
<div class="mi" style="bottom:181.5px">Footer Calculation</div>
<svg style="left:0;top:0" width="1" height="1"><path d="M515.5 688 L520.8 693.3 L515.5 698.6" fill="none" stroke="#6a6d70" stroke-width="1.2"/></svg>
<div class="mi" style="bottom:140.5px">Assign Reference...</div>
<div class="mi" style="bottom:96.5px">Formatting Rules...</div>
<div class="mi" style="bottom:52.5px">Data</div>
<svg style="left:0;top:0" width="1" height="1"><path d="M515.5 817 L520.8 822.3 L515.5 827.6" fill="none" stroke="#6a6d70" stroke-width="1.2"/></svg>
<div class="mi" style="bottom:9.899999999999977px">Format Table Cell</div>
<svg style="left:0;top:0" width="1" height="1"><path d="M515.5 859.6 L520.8 864.9 L515.5 870.2" fill="none" stroke="#6a6d70" stroke-width="1.2"/></svg>
<div class="a" style="left:501px;top:385.5px;font-size:17.5px;line-height:20px;color:#8c8c8c">Del</div>
<svg style="left:0;top:0" width="1" height="1" fill="none" stroke="#7d8084" stroke-width="1.3">
 <circle cx="317.6" cy="277.7" r="3.6"/><circle cx="327.1" cy="277.7" r="3.6"/>
 <path d="M319.6 274.6 L331.2 264.2 M325.1 274.6 L313.5 264.2"/>
 <path d="M319.2 307.8 H326.2 V322.6 H313.8 V313.2 Z M321.5 307.8 V303.8 H331 V318.8 H326.2 M319.2 307.8 V313.2 H313.8" stroke-linejoin="round"/>
 <path d="M317 316.8 H322.5 M317 319.4 H322.5" stroke-width="1"/>
 <path d="M316 389.5 L329 402.5 M329 389.5 L316 402.5" stroke="#6e7174" stroke-width="2"/>
 <path d="M313 428.5 H325 V437 H320.5 L317.5 440 V437 H313 Z" stroke="#a9acaf"/>
 <path d="M319.5 433 H332.5 V443 H329 V447.5 L325 443 H319.5 Z" stroke="#a9acaf" fill="#fff"/>
 <rect x="311.5" y="736.3" width="7.2" height="6.3"/><rect x="327" y="724.7" width="7" height="6.5"/>
 <path d="M318.8 739 C322.5 739 321.5 734 322.8 730.5 C323.6 728 325 727.8 327 727.8"/>
 <path d="M322.5 769.5 C317.5 769.5 316.5 773.5 316.5 777.5 V781.5 C316.5 783.5 314.5 785 313.5 786 H331.5 C330.5 785 328.5 783.5 328.5 781.5 V777.5 C328.5 773.5 327.5 769.5 322.5 769.5 Z"/>
 <path d="M320 786.5 C320 789 325 789 325 786.5" fill="#7d8084"/><circle cx="322.5" cy="769" r="0.9" fill="#7d8084"/>
 <path d="M311.8 813.8 L314.6 816.6 L317 814.2 L314.2 811.4 C317.5 810.4 320.5 813 319.6 816.4 L331.4 828.2 C332.3 829.1 332.3 830.5 331.4 831.4 C330.5 832.3 329.1 832.3 328.2 831.4 L316.4 819.6 C313 820.5 310.6 817.5 311.8 813.8 Z"/>
 <path d="M313.2 831.6 C312.4 830.8 312.4 829.6 313.2 828.8 L320.5 821.5 L323.3 824.3 L316 831.6 C315.2 832.4 314 832.4 313.2 831.6 Z M322 823 L329.8 815.2 L331.8 811.8 L333 813 L329.8 815.2"/>
</svg>
<div class="a" style="left:533.5px;top:458px;width:168px;height:380px;background:#fff;border:1px solid #d9d9d9;border-radius:5px;box-shadow:0 0 5px rgba(0,0,0,0.18)"></div>
<div class="ms" style="left:540px;top:625.3px;width:155px"></div>
<div class="ms" style="left:540px;top:710.9px;width:155px"></div>
<div class="ms" style="left:540px;top:753.8px;width:155px"></div>
<div class="si" style="bottom:396.6px">Add Filter</div>
<div class="si dis" style="bottom:355.9px">Remove Filter</div>
<div class="si" style="bottom:313.0px">Add Sort</div>
<div class="si dis" style="bottom:271.20000000000005px">Remove Sort</div>
<div class="si" style="bottom:228.0px">Add Rank</div>
<div class="si dis" style="bottom:186.5px">Remove Rank</div>
<div class="si" style="bottom:142.29999999999995px">Add Break</div>
<div class="si" style="bottom:99.5px">Edit Break</div>
<div class="si dis" style="bottom:57.89999999999998px">Remove Break</div>
<svg style="left:0;top:0" width="1" height="1" fill="none" stroke="#7a7d80" stroke-width="1.3">
 <path d="M545 469.5 H564.5 L557 478.5 V486.5 L553 482.5 V478.5 Z" stroke-linejoin="round"/>
 <path d="M549 572 V554 M545.5 557.5 L549 554 L552.5 557.5 M559 554 V571.5 M555.5 568 L559 571.5 L562.5 568"/>
 <path d="M548.5 640 H561.5 V645 C561.5 649 559 651 555 651 C551 651 548.5 649 548.5 645 Z M548.5 642 H545.5 V644 C545.5 646.5 547 647.5 549 647.5 M561.5 642 H564.5 V644 C564.5 646.5 563 647.5 561 647.5 M555 651 V654.5 M551 656 H559 L558 654.5 H552 Z"/>
 <path d="M544.5 727 H553 M544.5 727 V738 H549 M556 738 H565 V727 H559 M547 742 L556 723 M551 742 L560 723"/>
 <path d="M544.5 770 H553 M544.5 770 V781 H549 M556 781 H565 V770 H559 M547 785 L556 766 M551 785 L560 766"/>
</svg>
<div class="a" style="left:292px;top:798.5px;width:249.5px;height:53px;border:10.7px solid #f04141;box-shadow:1px 3px 6px rgba(0,0,0,0.4)"></div>
<div class="a" style="left:536.3px;top:531.4px;width:178.5px;height:58.3px;border:11px solid #f04141;box-shadow:1px 3px 6px rgba(0,0,0,0.4)"></div>
<div class="a" style="left:547px;top:543px;width:156px;height:36px;border:1px dotted #222;border-left:none;border-bottom:none"></div></div></div></body></html>
